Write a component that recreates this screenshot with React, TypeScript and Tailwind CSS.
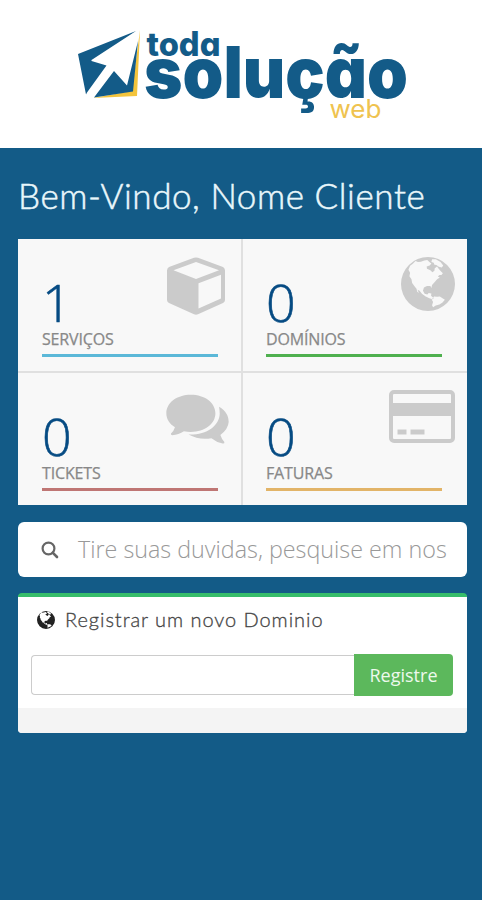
import type { ReactNode } from 'react';

interface Stat {
  label: string;
  value: number;
  bar: string;
  icon: ReactNode;
}

function CubeIcon() {
  return (
    <svg viewBox="0 0 58 58" className="w-[58px] h-[58px]">
      <path
        fillRule="evenodd"
        fill="#cbcbcb"
        d="M27 .8Q29 0 31 .8L56 10Q58 11 58 13.500V43Q58 45 56 46L31 57.300Q29 58.200 27 57.300L2 46Q0 45 0 43V13.500Q0 11 2 10ZM29 5L6.500 13.300 29 22 52 13.300ZM31.500 26.300V51.500L54 41.500V17.700Z"
      />
    </svg>
  );
}

function GlobeIcon({ className }: { className: string }) {
  return (
    <svg viewBox="493 81 160 160" className={className}>
      <path
        fillRule="evenodd"
        fill="currentColor"
        d="M573 81a80 80 0 1 1 0 160a80 80 0 1 1 0-160Z
        M536 93L528 101 520 107 515 119 520 128 518 138 524 147 526 158 533 168 539 175 541 184 546 188 542 178 548 181 555 190 566 198 577 203 586 206 590 203 582 196 583 189 575 188 571 192 563 190 558 181 561 171 570 167 580 167 583 173 585 164 593 155 600 147 608 142 602 139 607 134 613 134 617 129 609 121 604 115 600 109 593 114 592 122 586 126 580 120 570 116 569 109 578 106 583 100 577 96 571 90 562 91 552 95 543 96Z
        M585 88L596 88 610 96 618 106 614 112 605 110 598 105 592 104 590 98 583 96Z
        M591 198L600 199 608 198 616 203 623 208 616 216 607 222 596 225 588 230 585 224 588 214 584 207Z"
      />
    </svg>
  );
}

function CommentsIcon() {
  return (
    <svg viewBox="500 85 190 150" className="w-[63px] h-[50px]">
      <path
        fill="#cbcbcb"
        d="M575 87C617 87 649 111 649 143S617 199 575 199Q564 199 554 197Q538 208 519 209Q514 209 515 204Q523 198 527 185C510 175 501 160 501 143C501 111 533 87 575 87Z"
      />
      <path
        fill="#cbcbcb"
        d="M660 123C681 135 689 151 689 169Q688 190 664 208Q668 221 676 229Q677 235 671 234Q653 231 637 218Q599 224 568 207C621 209 661 181 662 144Q662 134 660 123Z"
      />
    </svg>
  );
}

function CardIcon() {
  return (
    <svg viewBox="0 0 66 53" className="w-[66px] h-[53px]">
      <rect x="2" y="2" width="62" height="49" rx="3" fill="none" stroke="#cbcbcb" strokeWidth="4" />
      <path fill="#cbcbcb" d="M2 13h62v13H2ZM8.500 39.500h9v5h-9ZM21.500 39.500h14v5h-14Z" />
    </svg>
  );
}

function SearchIcon() {
  return (
    <svg viewBox="0 0 18 18" className="w-[18px] h-[18px]" fill="none" stroke="#666" strokeWidth="2.200">
      <circle cx="7.500" cy="7.500" r="5.900" />
      <path d="M11.700 11.700L16 16" strokeWidth="2.600" strokeLinecap="round" />
    </svg>
  );
}

function Logo() {
  return (
    <svg viewBox="0 0 345 100" className="w-[345px] h-[100px] overflow-visible">
      {/* arrow mark, folded sheet in yellow behind */}
      <path fill="#f3c43c" d="M70 5L67 71 23 73 62 66Z" />
      <path
        fill="#135b88"
        d="M8 29L66 6 21.500 35 21.500 36 36.500 40.500 17 67.500 16 69.500ZM24 72.500L44 46 57 60.500 68 16 63 66.500Z"
      />
      <g className="font-['Inter',sans-serif]" fill="#135b88" style={{ fontFeatureSettings: '"cv11"' }}>
        <text x="76.500" y="31" fontSize="33.500" fontWeight="800" textLength="74" lengthAdjust="spacingAndGlyphs">toda</text>
        <text x="74" y="73" fontSize="71" fontWeight="900" textLength="264" lengthAdjust="spacingAndGlyphs">solução</text>
        <text x="259.500" y="92.500" fontSize="25" fill="#efc34f" textLength="52" lengthAdjust="spacingAndGlyphs">web</text>
      </g>
    </svg>
  );
}

const stats: Stat[] = [
  { label: 'SERVIÇOS', value: 1, bar: 'bg-[#5bb8d8]', icon: <div className="mt-[18px] mr-[16px]"><CubeIcon /></div> },
  { label: 'DOMÍNIOS', value: 0, bar: 'bg-[#4fb04f]', icon: <div className="mt-[18px] mr-[12px]"><GlobeIcon className="w-[54px] h-[54px] text-[#cbcbcb]" /></div> },
  { label: 'TICKETS', value: 0, bar: 'bg-[#bf7674]', icon: <div className="mt-[21px] mr-[12px]"><CommentsIcon /></div> },
  { label: 'FATURAS', value: 0, bar: 'bg-[#e2b468]', icon: <div className="mt-[17px] mr-[12px]"><CardIcon /></div> },
];

function StatTile({ label, value, bar, icon }: Stat) {
  return (
    <div className="relative bg-[#f8f8f8] pl-6 pt-[32px] even:pl-[23px]">
      <div className="absolute top-0 right-0">{icon}</div>
      <div className="h-[58px] text-[52px] leading-[62px] font-light [-webkit-text-stroke:0.6px] text-[#064b83]">
        {value}
      </div>
      <div className="h-[25px] text-[16px] leading-[20px] text-[#888] tracking-[-0.15px] [-webkit-text-stroke:0.25px]">
        {label}
      </div>
      <div className={`w-[176px] h-[3px] ${bar}`} />
    </div>
  );
}

export default function App() {
  return (
    <div className="w-[482px] h-[900px] overflow-hidden bg-[#135b87] font-['Open_Sans',sans-serif]">
      <header className="h-[148px] bg-white pl-[70px] pt-[25px]">
        <Logo />
      </header>

      <main className="pl-[18px] pr-[15px]">
        <h1 className="h-[91px] pt-[27px] font-['Lato',sans-serif] font-light text-[35px] leading-[40px] tracking-[0.57px] [-webkit-text-stroke:0.5px] text-[#e9f7fb] whitespace-nowrap">
          Bem-Vindo, Nome Cliente
        </h1>

        <section className="grid grid-cols-[223px_224px] grid-rows-[132px_132px] gap-[2px] h-[266px] bg-[#e0e0e0]">
          {stats.map((s) => (
            <StatTile key={s.label} {...s} />
          ))}
        </section>

        <div className="mt-[17px] flex items-center h-[55px] rounded-[6px] bg-white pl-[23px]">
          <SearchIcon />
          <span className="ml-[19px] -mt-px text-[23.300px] font-light text-[#999] whitespace-nowrap">
            Tire suas duvidas, pesquise em nos
          </span>
        </div>

        <section className="mt-[16px] h-[140px] rounded-[4px] overflow-hidden bg-white border-t-[4px] border-[#37bd6b] flex flex-col">
          <h2 className="flex items-center h-[45px] pl-[19px] font-['Lato',sans-serif] text-[20px] text-[#444]">
            <GlobeIcon className="w-[18px] h-[18px] text-[#222]" />
            <span className="ml-[10px] -mt-[2px] font-light tracking-[0.95px] [-webkit-text-stroke:0.3px] whitespace-nowrap">
              Registrar um novo Dominio
            </span>
          </h2>
          <div className="flex pl-[13px] pt-[13px] grow">
            <div className="w-[323px] h-[40px] border border-r-0 border-[#ccc] rounded-l-[4px]" />
            <button type="button" className="w-[99px] h-[42px] -mt-px rounded-r-[4px] bg-[#5cb85c] text-[18px] text-[#edf9ed]">
              Registre
            </button>
          </div>
          <div className="h-[25px] bg-[#f4f4f4]" />
        </section>
      </main>
    </div>
  );
}
